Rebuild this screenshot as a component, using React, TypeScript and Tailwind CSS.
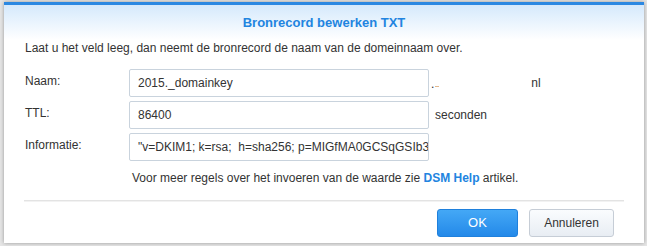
export default function App() {
  const font = { fontFamily: '"Liberation Sans", Arial, sans-serif' };

  return (
    <div className="w-[647px] h-[246px] overflow-hidden bg-[#e6e6e6] pt-[2px] pl-[4px]" style={font}>
      <div className="w-[640px] h-[241px] bg-white border-t-[3px] border-[#2b88e2] shadow-[0_0_4px_rgba(0,0,0,0.35)] flex flex-col">
        <div className="h-[35px] shrink-0 bg-gradient-to-b from-[#d5e9fc] to-white flex items-center justify-center">
          <span className="text-[13px] font-bold text-[#2284e0]">Bronrecord bewerken TXT</span>
        </div>

        <p className="pl-[21px] text-[12px] leading-[16px] text-[#333]">
          Laat u het veld leeg, dan neemt de bronrecord de naam van de domeinnaam over.
        </p>

        <div className="mt-[13px] flex flex-col gap-[4px] pl-[21px]">
          <div className="flex items-start">
            <span className="w-[104px] pt-[4px] text-[12px] leading-[16px] text-[#333]">Naam:</span>
            <div className="w-[300px] h-[28px] border border-[#c9d3dd] rounded-[2px] px-[8px] flex items-center text-[12px] text-[#333]">
              2015._domainkey
            </div>
            <span className="self-center ml-[2px] mt-[2px] text-[12px] text-[#333] leading-none">.</span>
            <span className="self-center ml-[1px] mt-[7px] w-[4px] h-[1px] bg-[#e2b88e]" />
            <span className="self-center ml-[92px] text-[12px] text-[#333]">nl</span>
          </div>

          <div className="flex items-start">
            <span className="w-[104px] pt-[4px] text-[12px] leading-[16px] text-[#333]">TTL:</span>
            <div className="w-[300px] h-[28px] border border-[#c9d3dd] rounded-[2px] px-[8px] flex items-center text-[12px] text-[#333]">
              86400
            </div>
            <span className="self-center ml-[6px] text-[12px] text-[#333]">seconden</span>
          </div>

          <div className="flex items-start">
            <span className="w-[104px] pt-[4px] text-[12px] leading-[16px] text-[#333]">Informatie:</span>
            <input
              readOnly
              value={'"v=DKIM1; k=rsa;  h=sha256; p=MIGfMA0GCSqGSIb3DQEBAQUAA4GNADCBiQKBgQ'}
              className="w-[300px] h-[28px] border border-[#c9d3dd] rounded-[2px] pl-[8px] pr-0 text-[12px] text-[#333] outline-none"
              style={font}
            />
          </div>
        </div>

        <p className="mt-[9px] pl-[128px] text-[12px] leading-[16px] text-[#333]">
          Voor meer regels over het invoeren van de waarde zie{' '}
          <span className="font-bold text-[#2284e0]">DSM Help</span> artikel.
        </p>

        <div className="mt-[14px] mx-[20px] h-[2px] bg-[#e3e3e3] border-b border-[#f2f2f2]" />

        <div className="mt-[7px] flex justify-end gap-[11px] pr-[30px]">
          <button className="w-[81px] h-[28px] rounded-[3px] border border-[#1f80dc] bg-gradient-to-b from-[#44a8f6] to-[#2389e9] text-[13px] text-white">
            OK
          </button>
          <button className="w-[85px] h-[28px] rounded-[3px] border border-[#c6cdd6] bg-gradient-to-b from-[#fafcfe] to-[#e8edf3] text-[12px] text-[#333]">
            Annuleren
          </button>
        </div>
      </div>
    </div>
  );
}
